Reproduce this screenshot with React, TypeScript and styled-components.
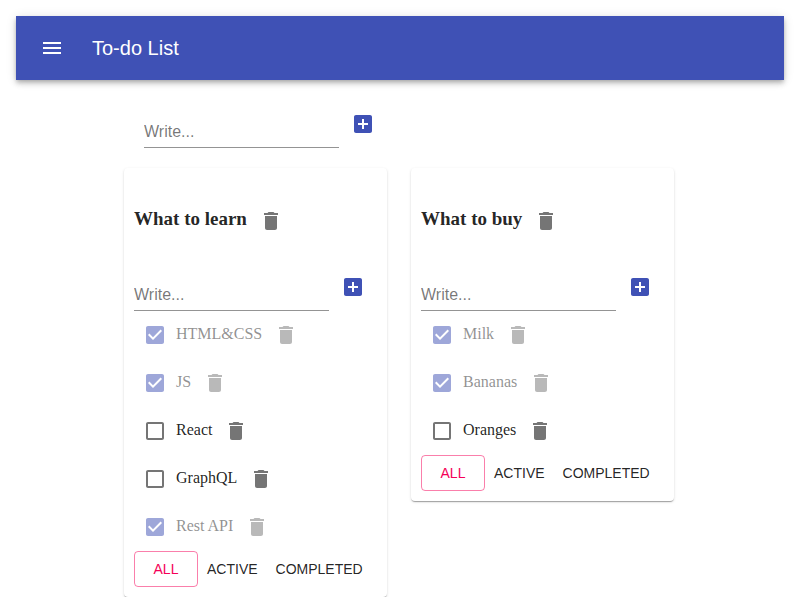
import React, { FormEvent, useState } from "react";
import styled, { createGlobalStyle } from "styled-components";

const GlobalStyle = createGlobalStyle`
  *, *::before, *::after {
    box-sizing: border-box;
  }
  body {
    margin: 0;
    background: #ffffff;
    color: rgba(0, 0, 0, 0.87);
    font-family: "Liberation Serif", "Times New Roman", serif;
    font-size: 16px;
  }
`;

const sans = `"Liberation Sans", Arial, Helvetica, sans-serif`;

const Page = styled.div`
  padding: 16px 16px 0;
`;

const AppBar = styled.header`
  display: flex;
  align-items: center;
  gap: 16px;
  min-height: 64px;
  padding: 0 12px;
  background: #3f51b5;
  color: #ffffff;
  box-shadow: 0 2px 4px -1px rgba(0, 0, 0, 0.2), 0 4px 5px 0 rgba(0, 0, 0, 0.14),
    0 1px 10px 0 rgba(0, 0, 0, 0.12);
`;

const AppTitle = styled.h1`
  margin: 0;
  font-family: ${sans};
  font-size: 20px;
  font-weight: 400;
  line-height: 32px;
`;

const Container = styled.main`
  max-width: 600px;
  margin: 0 auto;
  padding: 0 24px;
`;

const IconButton = styled.button<{ $tone?: "primary" | "inherit" }>`
  display: inline-flex;
  flex: none;
  padding: 12px;
  border: 0;
  border-radius: 50%;
  background: transparent;
  color: ${({ $tone }) =>
    $tone === "primary" ? "#3f51b5" : $tone === "inherit" ? "inherit" : "rgba(0, 0, 0, 0.54)"};
  cursor: pointer;

  &:hover {
    background: rgba(0, 0, 0, 0.04);
  }
`;

const Icon = styled.svg`
  display: block;
  width: 24px;
  height: 24px;
  fill: currentColor;
`;

const NewListArea = styled.section`
  padding: 20px;
`;

const AddForm = styled.form`
  display: flex;
  align-items: flex-start;
`;

const TextField = styled.input`
  width: 195px;
  min-width: 0;
  height: 32px;
  margin: 16px 0 0;
  padding: 0;
  border: 0;
  border-bottom: 1px solid rgba(0, 0, 0, 0.42);
  border-radius: 0;
  outline: 0;
  background: transparent;
  color: inherit;
  font-family: ${sans};
  font-size: 16px;

  &::placeholder {
    color: rgba(0, 0, 0, 0.54);
    opacity: 1;
  }

  &:focus {
    border-bottom-color: #3f51b5;
  }
`;

const Board = styled.div`
  display: flex;
  flex-wrap: wrap;
  align-items: flex-start;
  gap: 24px;
`;

const Card = styled.section`
  padding: 10px;
  border-radius: 4px;
  background: #ffffff;
  box-shadow: 0 2px 1px -1px rgba(0, 0, 0, 0.2), 0 1px 1px 0 rgba(0, 0, 0, 0.14),
    0 1px 3px 0 rgba(0, 0, 0, 0.12);
`;

const CardHeader = styled.div`
  display: flex;
  align-items: center;
  padding: 19px 0 18px;
`;

const CardTitle = styled.h2`
  margin: 0;
  font-size: 19px;
  font-weight: 700;
  line-height: 24px;
  padding-bottom: 4px;
`;

const TaskList = styled.ul`
  margin: 0;
  padding: 0;
  list-style: none;
`;

const TaskRow = styled.li<{ $done: boolean }>`
  display: flex;
  align-items: center;
  opacity: ${({ $done }) => ($done ? 0.5 : 1)};
`;

const TaskLabel = styled.label`
  display: flex;
  align-items: center;
  cursor: pointer;
`;

const CheckBox = styled.span<{ $checked: boolean }>`
  position: relative;
  padding: 9px;
  color: ${({ $checked }) => ($checked ? "#3f51b5" : "rgba(0, 0, 0, 0.54)")};
`;

const CheckInput = styled.input`
  position: absolute;
  inset: 0;
  width: 100%;
  height: 100%;
  margin: 0;
  opacity: 0;
  cursor: inherit;
`;

const TaskText = styled.span`
  line-height: 20px;
  padding-bottom: 2px;
`;

const Filters = styled.div`
  display: flex;
`;

const FilterButton = styled.button<{ $active: boolean }>`
  min-width: 64px;
  height: 36px;
  padding: 0 8px;
  border: 1px solid ${({ $active }) => ($active ? "rgba(245, 0, 87, 0.5)" : "transparent")};
  border-radius: 4px;
  background: transparent;
  color: ${({ $active }) => ($active ? "#f50057" : "inherit")};
  font-family: ${sans};
  font-size: 14px;
  text-transform: uppercase;
  cursor: pointer;
`;

const paths = {
  menu: "M3 18h18v-2H3v2zm0-5h18v-2H3v2zm0-7v2h18V6H3z",
  add: "M19 3H5c-1.11 0-2 .9-2 2v14c0 1.1.89 2 2 2h14c1.1 0 2-.9 2-2V5c0-1.1-.9-2-2-2zm-2 10h-4v4h-2v-4H7v-2h4V7h2v4h4v2z",
  remove: "M6 19c0 1.1.9 2 2 2h8c1.1 0 2-.9 2-2V7H6v12zM19 4h-3.5l-1-1h-5l-1 1H5v2h14V4z",
  unchecked: "M19 5v14H5V5h14m0-2H5c-1.1 0-2 .9-2 2v14c0 1.1.9 2 2 2h14c1.1 0 2-.9 2-2V5c0-1.1-.9-2-2-2z",
  checked:
    "M19 3H5c-1.11 0-2 .9-2 2v14c0 1.1.89 2 2 2h14c1.11 0 2-.9 2-2V5c0-1.1-.89-2-2-2zm-9 14l-5-5 1.41-1.41L10 14.17l7.59-7.59L19 8l-9 9z",
};

function Glyph({ name }: { name: keyof typeof paths }) {
  return (
    <Icon viewBox="0 0 24 24" aria-hidden="true">
      <path d={paths[name]} />
    </Icon>
  );
}

type Filter = "All" | "Active" | "Completed";
interface Task {
  id: number;
  text: string;
  done: boolean;
}
interface TodoList {
  id: number;
  title: string;
  filter: Filter;
  tasks: Task[];
}

const filters: Filter[] = ["All", "Active", "Completed"];

const initialLists: TodoList[] = [
  {
    id: 1,
    title: "What to learn",
    filter: "All",
    tasks: [
      { id: 11, text: "HTML&CSS", done: true },
      { id: 12, text: "JS", done: true },
      { id: 13, text: "React", done: false },
      { id: 14, text: "GraphQL", done: false },
      { id: 15, text: "Rest API", done: true },
    ],
  },
  {
    id: 2,
    title: "What to buy",
    filter: "All",
    tasks: [
      { id: 21, text: "Milk", done: true },
      { id: 22, text: "Bananas", done: true },
      { id: 23, text: "Oranges", done: false },
    ],
  },
];

function AddItem({ label, onAdd }: { label: string; onAdd: (text: string) => void }) {
  const [text, setText] = useState("");
  const submit = (event: FormEvent) => {
    event.preventDefault();
    if (text.trim()) {
      onAdd(text.trim());
      setText("");
    }
  };
  return (
    <AddForm onSubmit={submit}>
      <TextField
        type="text"
        aria-label={label}
        placeholder="Write..."
        value={text}
        onChange={(event) => setText(event.target.value)}
      />
      <IconButton type="submit" $tone="primary" aria-label={label}>
        <Glyph name="add" />
      </IconButton>
    </AddForm>
  );
}

interface TodoCardProps {
  list: TodoList;
  onChange: (list: TodoList) => void;
  onRemove: () => void;
}

function TodoCard({ list, onChange, onRemove }: TodoCardProps) {
  const visible = list.tasks.filter(
    (task) => list.filter === "All" || task.done === (list.filter === "Completed")
  );
  const setTasks = (tasks: Task[]) => onChange({ ...list, tasks });

  return (
    <Card>
      <CardHeader>
        <CardTitle>{list.title}</CardTitle>
        <IconButton type="button" aria-label={`Delete ${list.title}`} onClick={onRemove}>
          <Glyph name="remove" />
        </IconButton>
      </CardHeader>
      <AddItem
        label={`Add to ${list.title}`}
        onAdd={(text) => setTasks([{ id: Date.now(), text, done: false }, ...list.tasks])}
      />
      <TaskList>
        {visible.map((task) => (
          <TaskRow key={task.id} $done={task.done}>
            <TaskLabel>
              <CheckBox $checked={task.done}>
                <CheckInput
                  type="checkbox"
                  checked={task.done}
                  onChange={() =>
                    setTasks(list.tasks.map((t) => (t.id === task.id ? { ...t, done: !t.done } : t)))
                  }
                />
                <Glyph name={task.done ? "checked" : "unchecked"} />
              </CheckBox>
              <TaskText>{task.text}</TaskText>
            </TaskLabel>
            <IconButton
              type="button"
              aria-label={`Delete ${task.text}`}
              onClick={() => setTasks(list.tasks.filter((t) => t.id !== task.id))}
            >
              <Glyph name="remove" />
            </IconButton>
          </TaskRow>
        ))}
      </TaskList>
      <Filters>
        {filters.map((filter) => (
          <FilterButton
            key={filter}
            type="button"
            $active={list.filter === filter}
            aria-pressed={list.filter === filter}
            onClick={() => onChange({ ...list, filter })}
          >
            {filter}
          </FilterButton>
        ))}
      </Filters>
    </Card>
  );
}

export default function App() {
  const [lists, setLists] = useState(initialLists);

  return (
    <>
      <GlobalStyle />
      <Page>
        <AppBar>
          <IconButton type="button" $tone="inherit" aria-label="Menu">
            <Glyph name="menu" />
          </IconButton>
          <AppTitle>To-do List</AppTitle>
        </AppBar>
        <Container>
          <NewListArea>
            <AddItem
              label="Add list"
              onAdd={(title) =>
                setLists([{ id: Date.now(), title, filter: "All", tasks: [] }, ...lists])
              }
            />
          </NewListArea>
          <Board>
            {lists.map((list) => (
              <TodoCard
                key={list.id}
                list={list}
                onChange={(next) => setLists(lists.map((l) => (l.id === next.id ? next : l)))}
                onRemove={() => setLists(lists.filter((l) => l.id !== list.id))}
              />
            ))}
          </Board>
        </Container>
      </Page>
    </>
  );
}
